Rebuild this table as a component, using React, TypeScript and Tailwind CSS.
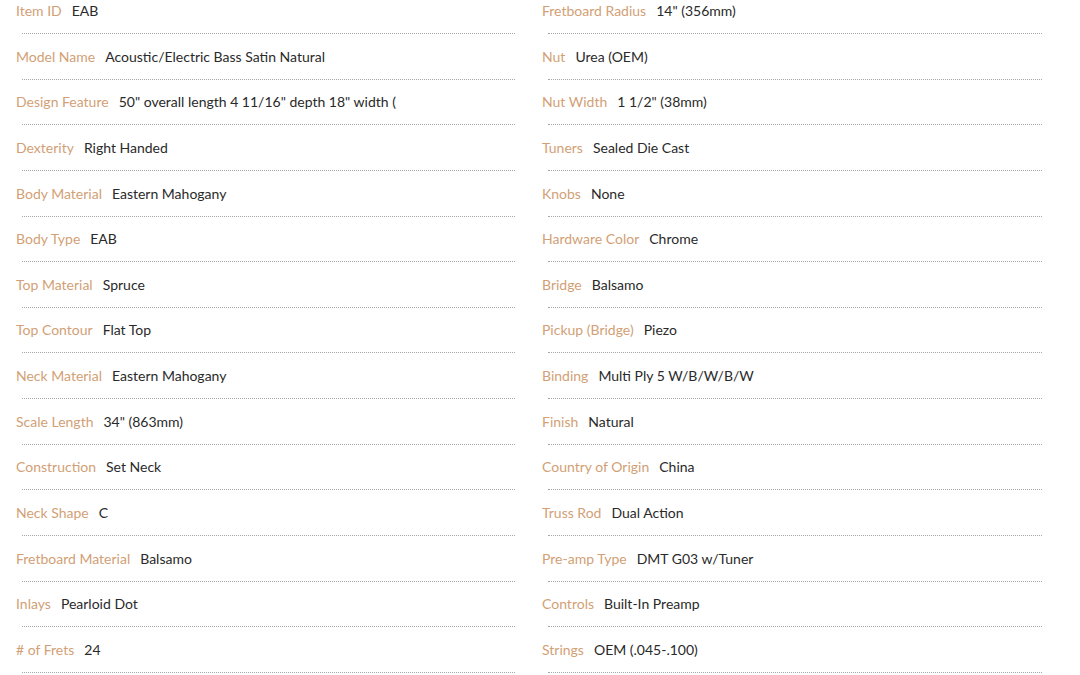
import React from "react";

const left: [string, string][] = [
  ["Item ID", "EAB"],
  ["Model Name", "Acoustic/Electric Bass Satin Natural"],
  ["Design Feature", "50\" overall length 4 11/16\" depth 18\" width ("],
  ["Dexterity", "Right Handed"],
  ["Body Material", "Eastern Mahogany"],
  ["Body Type", "EAB"],
  ["Top Material", "Spruce"],
  ["Top Contour", "Flat Top"],
  ["Neck Material", "Eastern Mahogany"],
  ["Scale Length", "34\" (863mm)"],
  ["Construction", "Set Neck"],
  ["Neck Shape", "C"],
  ["Fretboard Material", "Balsamo"],
  ["Inlays", "Pearloid Dot"],
  ["# of Frets", "24"],
];

const right: [string, string][] = [
  ["Fretboard Radius", "14\" (356mm)"],
  ["Nut", "Urea (OEM)"],
  ["Nut Width", "1 1/2\" (38mm)"],
  ["Tuners", "Sealed Die Cast"],
  ["Knobs", "None"],
  ["Hardware Color", "Chrome"],
  ["Bridge", "Balsamo"],
  ["Pickup (Bridge)", "Piezo"],
  ["Binding", "Multi Ply 5 W/B/W/B/W"],
  ["Finish", "Natural"],
  ["Country of Origin", "China"],
  ["Truss Rod", "Dual Action"],
  ["Pre-amp Type", "DMT G03 w/Tuner"],
  ["Controls", "Built-In Preamp"],
  ["Strings", "OEM (.045-.100)"],
];

function Row({ label, value }: { label: string; value: string }) {
  return (
    <div className="h-[45.64px] flex flex-col">
      <div className="h-5 flex items-center gap-[10px] text-[14px] leading-5 whitespace-nowrap">
        <span className="text-[#d29f76]">{label}</span>
        <span className="text-[#2a2a2a]">{value}</span>
      </div>
      <div className="mt-3 ml-[6px] border-t border-dotted border-[#a6a6a6]" />
    </div>
  );
}

export default function App() {
  return (
    <div
      className="w-[1080px] h-[675px] overflow-hidden bg-white pt-[1px] pl-4 pr-[38px] grid grid-cols-[499px_500px] gap-x-[27px]"
      style={{ fontFamily: "Lato, 'Open Sans', sans-serif" }}
    >
      <div className="flex flex-col">
        {left.map(([l, v]) => (
          <Row key={l} label={l} value={v} />
        ))}
      </div>
      <div className="flex flex-col">
        {right.map(([l, v]) => (
          <Row key={l} label={l} value={v} />
        ))}
      </div>
    </div>
  );
}
